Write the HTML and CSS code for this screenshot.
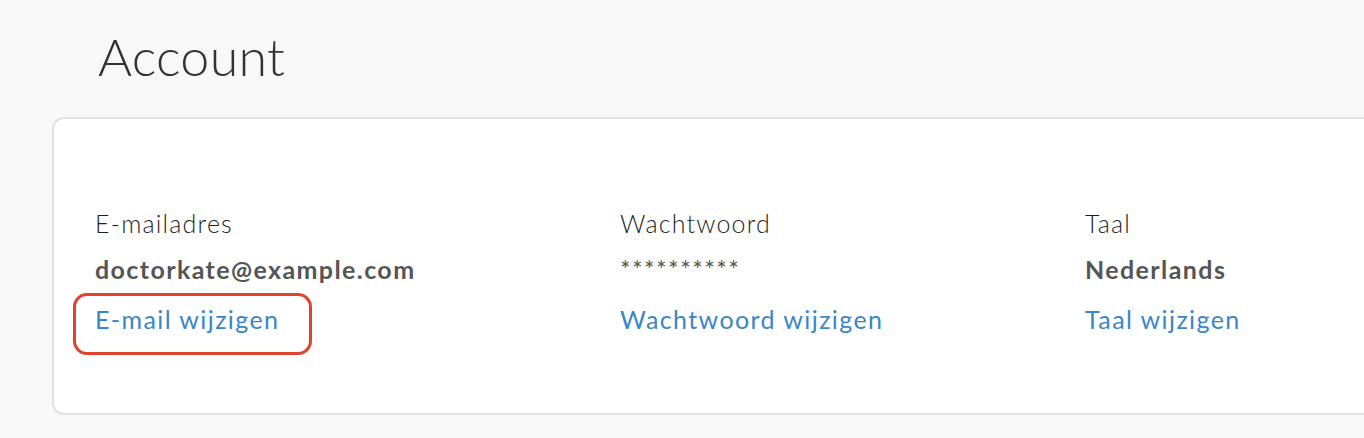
FILE: index.html
```html
<!DOCTYPE html>
<html lang="nl">
<head>
<meta charset="utf-8">
<title>Account</title>
<link rel="stylesheet" href="styles.css">
</head>
<body>
<main class="page">
  <h1 class="page-title">Account</h1>
  <section class="card">
    <div class="settings">
      <div class="setting">
        <div class="setting-label">E-mailadres</div>
        <div class="setting-value">doctorkate@example.com</div>
        <a class="setting-link highlighted" href="#">E-mail wijzigen<span class="highlight-ring"></span></a>
      </div>
      <div class="setting">
        <div class="setting-label">Wachtwoord</div>
        <div class="setting-value masked">**********</div>
        <a class="setting-link" href="#">Wachtwoord wijzigen</a>
      </div>
      <div class="setting">
        <div class="setting-label">Taal</div>
        <div class="setting-value">Nederlands</div>
        <a class="setting-link" href="#">Taal wijzigen</a>
      </div>
    </div>
  </section>
</main>
</body>
</html>
```
FILE: styles.css
```css
html, body {
  margin: 0;
  padding: 0;
  background: #f8f8f8;
  overflow: hidden;
}

body {
  font-family: Lato, "Open Sans", sans-serif;
  color: #333;
}

.page {
  padding: 25px 0 0 52px;
}

.page-title {
  margin: 0 0 30px 46px;
  font-size: 52px;
  font-weight: 300;
  line-height: 62px;
  letter-spacing: 0.3px;
  color: #333;
}

.card {
  width: 1400px;
  height: 298px;
  box-sizing: border-box;
  background: #fff;
  border: 2px solid #e2e2e2;
  border-radius: 12px;
  padding: 90px 0 0 41px;
}

.settings {
  display: grid;
  grid-template-columns: 525px 465px 1fr;
}

.setting {
  display: flex;
  flex-direction: column;
  align-items: flex-start;
  font-size: 25px;
  line-height: 29px;
  letter-spacing: 1.4px;
}

.setting-label {
  font-weight: 300;
  color: #1f1f1f;
  letter-spacing: 1.2px;
}

.setting-value {
  margin-top: 17px;
  font-weight: 700;
  color: #555;
}

.setting-value.masked {
  font-weight: 400;
}

.setting-link {
  margin-top: 21px;
  color: #3a86c8;
  text-decoration: none;
  font-weight: 400;
}

.highlighted {
  position: relative;
}

.highlight-ring {
  position: absolute;
  left: -22px;
  top: -12px;
  right: -33px;
  bottom: -21px;
  border: 3px solid #e0432b;
  border-radius: 14px;
}
```
